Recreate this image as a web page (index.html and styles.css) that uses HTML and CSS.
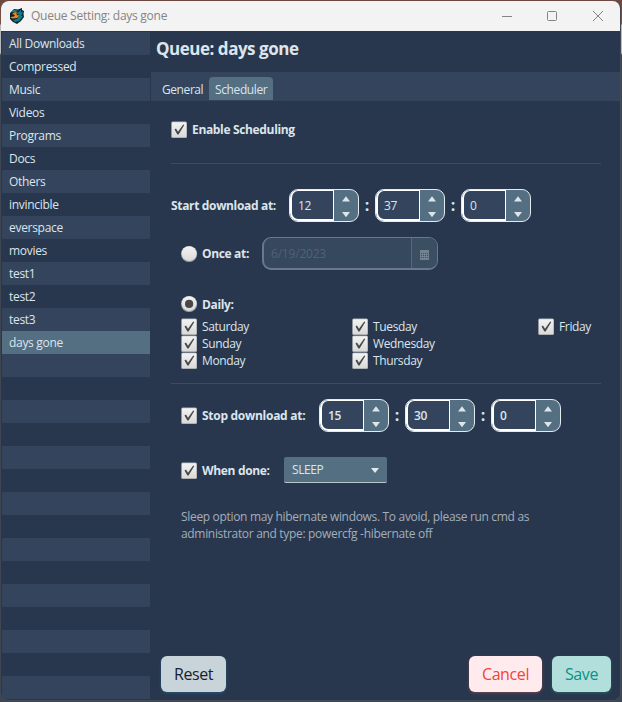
FILE: index.html
```
<!DOCTYPE html>
<html lang="en">
<head>
<meta charset="utf-8">
<title>Queue Setting: days gone</title>
<link rel="stylesheet" href="styles.css">
</head>
<body>
<svg class="defs" width="0" height="0" aria-hidden="true">
  <defs>
    <linearGradient id="face" x1="0" y1="0" x2="0" y2="1"><stop offset="0" stop-color="#f3f3f3"/><stop offset="1" stop-color="#dadada"/></linearGradient>
    <symbol id="check" viewBox="0 0 17 18">
      <rect x=".2" y=".6" width="15.8" height="16.4" rx="1.5" fill="#aeb1b5"/>
      <rect x="1" y="1.2" width="14.2" height="14.8" rx=".8" fill="url(#face)"/>
      <path d="M3.5 8.5L5 7.5L7 10.8L12.2 3.6L13.3 4L7.6 13.4L6.4 13.4Z" fill="#484848"/>
    </symbol>
    <symbol id="radio" viewBox="0 0 17 18">
      <circle cx="8.1" cy="9" r="8.1" fill="#a5a8ab"/><circle cx="8.1" cy="8.6" r="7.4" fill="url(#face)"/>
    </symbol>
    <symbol id="radio-on" viewBox="0 0 17 18">
      <use href="#radio"/><circle cx="8.1" cy="8.9" r="4.1" fill="#484848"/>
    </symbol>
    <symbol id="arrows" viewBox="0 0 24 31">
      <path d="M8 11.5L12 6.3L16 11.5ZM8 22L16 22L12 27.2Z" fill="#dce5ea"/>
    </symbol>
  </defs>
</svg>
<div class="window">
  <header class="titlebar">
    <svg class="logo" viewBox="0 0 16 16"><path d="M1 5L3 3L5 1L9 1.5L13 0L13 2L15 3L14.5 6L15 9L12 13L8 16L4 14L1 11Z" fill="#10242d"/><path d="M8 6L12 1.5L12 4L14 4L12 8L14 8L10 13L6 14L4 12L8 11L11 7Z" fill="#087f91"/><path d="M3 6L6 4L9.5 5L7 5.5L8.5 7.5L11 7L8 10L3 10.5L1.5 9L5 8.5L6 7Z" fill="#e58a20"/><path d="M2 4.5L5 2L10 3L5 4Z" fill="#1792a5"/></svg>
    <span class="caption">Queue Setting: days gone</span>
    <svg class="controls" viewBox="0 0 104 14" fill="none" stroke="#858585"><path d="M0 7.5H10"/><rect x="45.5" y="2.5" width="9" height="9" rx="1"/><path d="M91 2L101 12M101 2L91 12"/></svg>
  </header>
  <div class="body">
    <ul class="queues">
      <li>All Downloads</li><li>Compressed</li><li>Music</li><li>Videos</li><li>Programs</li><li>Docs</li><li>Others</li><li>invincible</li><li>everspace</li><li>movies</li><li>test1</li><li>test2</li><li>test3</li><li class="selected">days gone</li>
      <li></li><li></li><li></li><li></li><li></li><li></li><li></li><li></li><li></li><li></li><li></li><li></li><li></li><li></li><li></li>
    </ul>
    <main>
      <h1><span>Queue: days gone</span></h1>
      <nav><span class="tab general">General</span><span class="tab active">Scheduler</span></nav>
      <section class="form">
        <div class="row enable"><svg class="mark"><use href="#check"/></svg><b class="enable-text">Enable Scheduling</b></div>
        <hr>
        <div class="row start"><b class="start-text">Start download at:</b>
          <div class="spinner"><span>12</span><svg><use href="#arrows"/></svg></div><i>:</i>
          <div class="spinner"><span>37</span><svg><use href="#arrows"/></svg></div><i>:</i>
          <div class="spinner"><span>0</span><svg><use href="#arrows"/></svg></div>
        </div>
        <div class="row once"><svg class="mark"><use href="#radio"/></svg><b class="once-text">Once at:</b>
          <div class="date"><span>6/19/2023</span><div class="cal"><svg viewBox="0 0 9 10"><path d="M0 0H9V10H0Z" fill="#728290"/><path d="M1 3.5H8M1 5.5H8M1 7.5H8" stroke="#3a4f62" stroke-dasharray="1 1"/></svg></div></div>
        </div>
        <div class="row daily"><svg class="mark"><use href="#radio-on"/></svg><b class="daily-text">Daily:</b></div>
        <div class="days">
          <div class="row"><svg class="mark"><use href="#check"/></svg><span>Saturday</span></div>
          <div class="row"><svg class="mark"><use href="#check"/></svg><span>Sunday</span></div>
          <div class="row"><svg class="mark"><use href="#check"/></svg><span>Monday</span></div>
          <div class="row"><svg class="mark"><use href="#check"/></svg><span>Tuesday</span></div>
          <div class="row"><svg class="mark"><use href="#check"/></svg><span>Wednesday</span></div>
          <div class="row"><svg class="mark"><use href="#check"/></svg><span>Thursday</span></div>
          <div class="row"><svg class="mark"><use href="#check"/></svg><span>Friday</span></div>
        </div>
        <hr>
        <div class="row stop"><svg class="mark"><use href="#check"/></svg><b class="stop-text">Stop download at:</b>
          <div class="spinner"><span>15</span><svg><use href="#arrows"/></svg></div><i>:</i>
          <div class="spinner"><span>30</span><svg><use href="#arrows"/></svg></div><i>:</i>
          <div class="spinner"><span>0</span><svg><use href="#arrows"/></svg></div>
        </div>
        <div class="row done"><svg class="mark"><use href="#check"/></svg><b class="done-text">When done:</b>
          <div class="combo"><span>SLEEP</span><svg viewBox="0 0 8 5"><path d="M0 0H8L4 5Z" fill="#e3eaee"/></svg></div>
        </div>
        <p><span class="note-a">Sleep option may hibernate windows. To avoid, please run cmd as</span><br><span class="note-b">administrator and type: powercfg -hibernate off</span></p>
      </section>
      <footer><button class="reset">Reset</button><button class="cancel">Cancel</button><button class="save">Save</button></footer>
    </main>
  </div>
</div>
</body>
</html>
```
FILE: styles.css
```
* { box-sizing: border-box; }
body { margin: 0; height: 702px; overflow: hidden; padding: 1px; background: linear-gradient(#6d4840 0, #79534a 24px, #b8babc 25px, #b8babc 53px, #3e4651 55px, #3e4651 100%); font: 12px/17px "Open Sans", "Noto Sans", sans-serif; letter-spacing: -.3px; color: #dce5ec; }
.defs { display: block; }
svg { display: block; flex: none; }
.window { height: 700px; border-radius: 8px; overflow: hidden; background: #28374d; border: solid #424b58; border-width: 0 1px 1px 0; }
.titlebar { height: 30px; background: #f3f3f3; display: flex; align-items: center; padding-left: 8px; color: #858585; }
.logo { width: 16px; height: 16px; margin-top: -1px; }
.caption { margin: -1px 0 0 6px; letter-spacing: -.26px; }
.controls { width: 104px; height: 14px; margin: -1px 14px 0 auto; }
.body { display: flex; height: 669px; }
.queues { list-style: none; margin: 0 1px 0 0; padding: 1px 0 0 1px; width: 149px; flex: none; }
.queues li { height: 23px; line-height: 23px; padding-left: 7px; }
.queues li:nth-child(odd) { background: #34445c; }
.queues .selected { background: #546e82; }
main { flex: 1; display: flex; flex-direction: column; }
h1 { margin: 0; height: 41px; padding: 6px 0 0 5px; font-size: 17px; line-height: 24px; font-weight: 700; letter-spacing: -.48px; }
nav { height: 29px; background: #34445c; display: flex; align-items: flex-end; padding: 0 0 1px 11px; }
.tab { height: 23px; line-height: 25px; }
.general { width: 47px; letter-spacing: -.42px; }
.active { width: 64px; padding-left: 6px; background: #546e82; border-radius: 4px 4px 0 0; letter-spacing: -.38px; }
.form { padding: 20px 19px 0 20px; flex: 1; }
.row { display: flex; align-items: center; white-space: nowrap; }
.mark { width: 17px; height: 18px; margin-right: 4px; }
b { letter-spacing: -.34px; }
.enable { height: 18px; }
.enable-text { margin-top: -1px; }
hr { border: 0; height: 1px; margin: 0; background: #404b5e; }
.enable + hr { margin-top: 24px; }
.start { height: 33px; margin-top: 25px; }
.start-text { width: 118px; }
.spinner { width: 70px; height: 33px; display: flex; border: 1px solid #e4ebef; border-radius: 9px; overflow: hidden; background: #546e82; }
.spinner span { width: 44px; border: 2px solid #fff; border-width: 1px 1px 2px 2px; border-radius: 8px 0 0 8px; background: #34445c; line-height: 30px; padding-left: 6px; }
.spinner svg { width: 24px; height: 31px; }
i { width: 16px; text-align: center; font: 700 16px/17px "Open Sans", sans-serif; }
.once { height: 33px; margin: 15px 0 0 10px; }
.once-text { width: 60px; }
.date { width: 176px; height: 33px; border: 2px solid #69788a; border-width: 1px 1px 2px 2px; border-radius: 9px; background: #35485e; display: flex; overflow: hidden; color: #526273; line-height: 31px; }
.date span { flex: 1; padding-left: 7px; letter-spacing: -.2px; }
.cal { width: 26px; border-left: 1px solid #56697a; background: #3a4f62; display: flex; align-items: center; justify-content: center; }
.cal svg { width: 9px; height: 10px; margin-top: 3px; }
.daily { height: 18px; margin: 25px 0 0 10px; }
.days { display: grid; grid-auto-flow: column; grid-template-rows: repeat(3, 17px); grid-template-columns: 171px 186px 63px; margin: 5px 0 0 10px; letter-spacing: -.36px; }
.days + hr { margin-top: 14px; }
.stop { height: 33px; margin: 15px 0 0 10px; }
.stop .mark { margin-top: 1px; }
.stop-text { width: 117px; letter-spacing: -.28px; }
.stop .spinner { font-weight: 600; }
.done { height: 26px; margin: 25px 0 0 10px; }
.done .mark { margin-top: 1px; }
.done-text { width: 82px; }
.combo { width: 103px; height: 26px; background: #546e82; border-bottom: 1px solid #bac5cc; border-radius: 2px; display: flex; align-items: center; justify-content: space-between; padding: 0 8px; }
.combo span { letter-spacing: -.45px; }
.combo svg { width: 8px; height: 5px; margin-top: 2px; }
p { margin: 25px 0 0 10px; color: #a4aeba; white-space: nowrap; letter-spacing: -.32px; }
footer { height: 45px; display: flex; padding: 0 9px 0 10px; }
button { height: 36px; margin-top: 1px; padding: 0; border: 0; border-radius: 6px; font: 16px/35px "Open Sans", sans-serif; letter-spacing: -.4px; }
.reset { width: 65px; background: #c9d4da; color: #17212b; box-shadow: 0 1px 3px #285675; }
.cancel { width: 73px; margin-left: auto; background: #ffebee; color: #f44336; box-shadow: 0 1px 3px #754451; }
.save { width: 59px; margin-left: 10px; background: #b2dfdb; color: #009688; box-shadow: 0 1px 3px #28655f; }
```
